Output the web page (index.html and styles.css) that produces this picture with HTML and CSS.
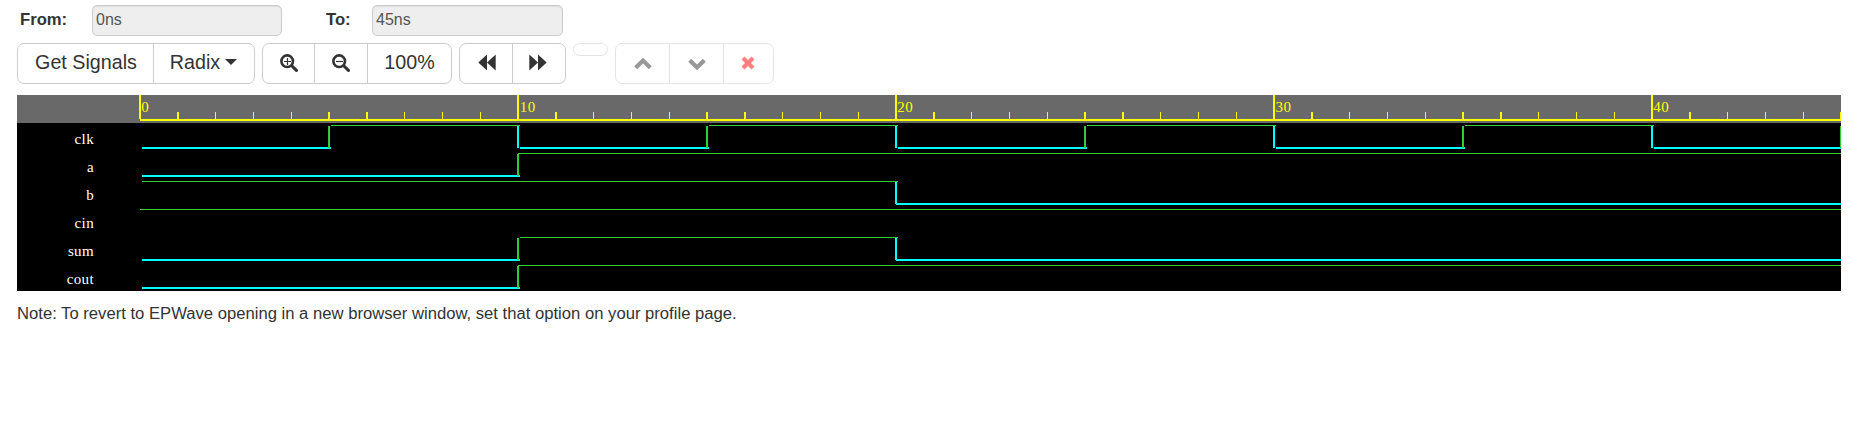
FILE: index.html
```html
<!DOCTYPE html>
<html lang="en">
<head>
<meta charset="utf-8">
<title>EPWave</title>
<link rel="stylesheet" href="styles.css">
</head>
<body>
<form class="range">
  <label class="from" for="from">From:</label><input id="from" class="field" value="0ns" disabled>
  <label class="to" for="to">To:</label><input id="to" class="field field-to" value="45ns" disabled>
</form>
<div class="toolbar">
  <div class="group">
    <button class="btn signals">Get Signals</button>
    <button class="btn radix">Radix <span class="caret"></span></button>
  </div>
  <div class="group">
    <button class="btn zin" aria-label="Zoom in"><svg width="18" height="18" viewBox="0 0 18 18"><circle cx="7.2" cy="7.2" r="5.8" fill="none" stroke="#333" stroke-width="2.6"/><path d="M12 12l4.4 4.4" stroke="#333" stroke-width="3.1" stroke-linecap="round"/><path d="M4 7.5h7M7.5 4v7" stroke="#333" stroke-width="1.2"/></svg></button>
    <button class="btn zout" aria-label="Zoom out"><svg width="18" height="18" viewBox="0 0 18 18"><circle cx="7.2" cy="7.2" r="5.8" fill="none" stroke="#333" stroke-width="2.6"/><path d="M12 12l4.4 4.4" stroke="#333" stroke-width="3.1" stroke-linecap="round"/><path d="M4 7.5h7" stroke="#333" stroke-width="1.2"/></svg></button>
    <button class="btn full">100%</button>
  </div>
  <div class="group">
    <button class="btn back" aria-label="Back"><svg width="18" height="17" viewBox="0 0 18 17"><path d="M9 .5V16.5L.3 8.5zM17.7 .5V16.5L9 8.5z" fill="#333"/></svg></button>
    <button class="btn fwd" aria-label="Forward"><svg width="18" height="17" viewBox="0 0 18 17"><path d="M.3 .5V16.5L9 8.5zM9 .5V16.5L17.7 8.5z" fill="#333"/></svg></button>
  </div>
  <div class="group faded empty"></div>
  <div class="group faded">
    <button class="btn up" aria-label="Move up"><svg width="18" height="12" viewBox="0 0 18 12"><path d="M1.7 9.7L9 2.6l7.3 7.1" fill="none" stroke="#333" stroke-width="4.2"/></svg></button>
    <button class="btn down" aria-label="Move down"><svg width="18" height="12" viewBox="0 0 18 12"><path d="M1.7 2.3L9 9.4l7.3-7.1" fill="none" stroke="#333" stroke-width="4.2"/></svg></button>
    <button class="btn del" aria-label="Remove"><svg width="14" height="14" viewBox="0 0 14 14"><path d="M2 2l10 10M12 2l-10 10" stroke="red" stroke-width="4.2"/></svg></button>
  </div>
</div>
<div class="wave">
  <div class="row ruler">
    <span class="name"></span>
    <svg class="track" width="1702" height="28">
      <defs>
        <g id="decade"><path d="M0 0h2v24h-2zM38 17h2v8h-2zM76 17h1v8h-1zM114 17h1v8h-1zM152 17h1v8h-1zM189 17h2v8h-2zM227 17h2v8h-2zM265 17h1v8h-1zM303 17h1v8h-1zM341 17h1v8h-1z"/></g>
      </defs>
      <g fill="#ff0">
        <use href="#decade"/><use href="#decade" x="378"/><use href="#decade" x="756"/><use href="#decade" x="1134"/><use href="#decade" x="1512"/>
        <path d="M1 24h1701v2H1z"/>
      </g>
      <g class="time"><text x="2.3" y="17">0</text><text x="380.8" y="17">10</text><text x="758.3" y="17">20</text><text x="1136.4" y="17">30</text><text x="1514.3" y="17">40</text></g>
    </svg>
  </div>
  <div class="row">
    <span class="name">clk</span>
    <svg class="track" width="1702" height="28">
      <path class="lo" d="M3 24h189v2H3zM381 24h189v2H381zM759 24h189v2H759zM1137 24h189v2h-189zM1515 24h187v2h-187zM378 3h2v22h-2zM756 3h2v22h-2zM1134 3h2v22h-2zM1512 3h2v22h-2z"/>
      <path class="hi" d="M192 2h189v1H192zM570 2h189v1H570zM948 2h189v1H948zM1326 2h189v1h-189zM189 3h2v22h-2zM567 3h2v22h-2zM945 3h2v22h-2zM1323 3h2v22h-2zM1701 3h1v22h-1z"/>
    </svg>
  </div>
  <div class="row">
    <span class="name">a</span>
    <svg class="track" width="1702" height="28"><path class="lo" d="M3 24h378v2H3z"/><path class="hi" d="M378 3h2v22h-2zM379 2h1323v1H379z"/></svg>
  </div>
  <div class="row">
    <span class="name">b</span>
    <svg class="track" width="1702" height="28"><path class="hi" d="M3 2h756v1H3z"/><path class="lo" d="M756 3h2v22h-2zM757 24h945v2H757z"/></svg>
  </div>
  <div class="row">
    <span class="name">cin</span>
    <svg class="track" width="1702" height="28"><path class="hi" d="M1 2h1701v1H1z"/></svg>
  </div>
  <div class="row">
    <span class="name">sum</span>
    <svg class="track" width="1702" height="28"><path class="lo" d="M3 24h378v2H3zM756 3h2v22h-2zM757 24h945v2H757z"/><path class="hi" d="M378 3h2v22h-2zM381 2h378v1H381z"/></svg>
  </div>
  <div class="row">
    <span class="name">cout</span>
    <svg class="track" width="1702" height="28"><path class="lo" d="M3 24h378v2H3z"/><path class="hi" d="M378 3h2v22h-2zM379 2h1323v1H379z"/></svg>
  </div>
</div>
<p class="note">Note: To revert to EPWave opening in a new browser window, set that option on your profile page.</p>
</body>
</html>
```
FILE: styles.css
```css
* { box-sizing: border-box; }
body {
  margin: 0;
  padding: 5px 17px 0;
  background: #fff;
  color: #333;
  font: 16.65px/20px "Liberation Sans", Arial, sans-serif;
}
.range { display: flex; height: 31px; margin: 0; }
.range label { font-weight: bold; line-height: 29px; }
.from { width: 75px; padding-left: 3px; }
.to { width: 89px; padding-left: 44px; }
.field {
  width: 190px;
  height: 31px;
  padding: 0 3px 2px;
  border: 1px solid #ccc;
  border-radius: 5px;
  background: #eee;
  box-shadow: inset 0 1px 1px rgba(0, 0, 0, .075);
  color: #555;
  font: 16px/20px "Liberation Sans", Arial, sans-serif;
}
.field-to { width: 191px; margin-left: 1px; }
.toolbar { display: flex; align-items: flex-start; gap: 7px; margin-top: 7px; }
.group { display: flex; border: 1px solid #ccc; border-radius: 7px; background: #fff; }
.faded { opacity: .5; }
.btn {
  display: flex;
  align-items: center;
  justify-content: center;
  height: 39px;
  padding: 0 0 4px;
  border: 0;
  background: none;
  color: #333;
  font: 19.7px/24px "Liberation Sans", Arial, sans-serif;
}
.btn + .btn { border-left: 1px solid #ccc; }
.signals { width: 135px; padding-left: 1px; }
.btn.radix { width: 101px; padding-right: 1px; }
.caret {
  margin: 1px 0 0 5px;
  border: 6px solid transparent;
  border-top-color: #333;
  border-bottom: 0;
}
.zin { width: 51px; padding: 0 0 1px 1px; }
.zout { width: 53px; padding-bottom: 1px; }
.full { width: 84px; }
.back { width: 52px; padding: 0 0 2px 2px; }
.fwd { width: 53px; padding: 0 2px 2px 0; }
.empty { width: 35px; height: 13px; }
.up { width: 53px; padding-bottom: 0; }
.down { width: 54px; padding-bottom: 0; }
.del { width: 50px; padding: 0 1px 1px 0; }
.wave { margin-top: 11px; background: #000; }
.row { display: flex; height: 28px; }
.ruler { background: #696969; }
.name {
  width: 122px;
  padding-right: 45px;
  color: #fff;
  font: 15px/32px "Liberation Serif", "Times New Roman", serif;
  letter-spacing: .35px;
  text-align: right;
}
.track { display: block; shape-rendering: crispEdges; }
.time { fill: #ff0; font: 15px "Liberation Serif", "Times New Roman", serif; letter-spacing: .5px; }
.lo { fill: #0ff; }
.hi { fill: #32cd32; }
.note { margin: 13px 0 0; }
```
